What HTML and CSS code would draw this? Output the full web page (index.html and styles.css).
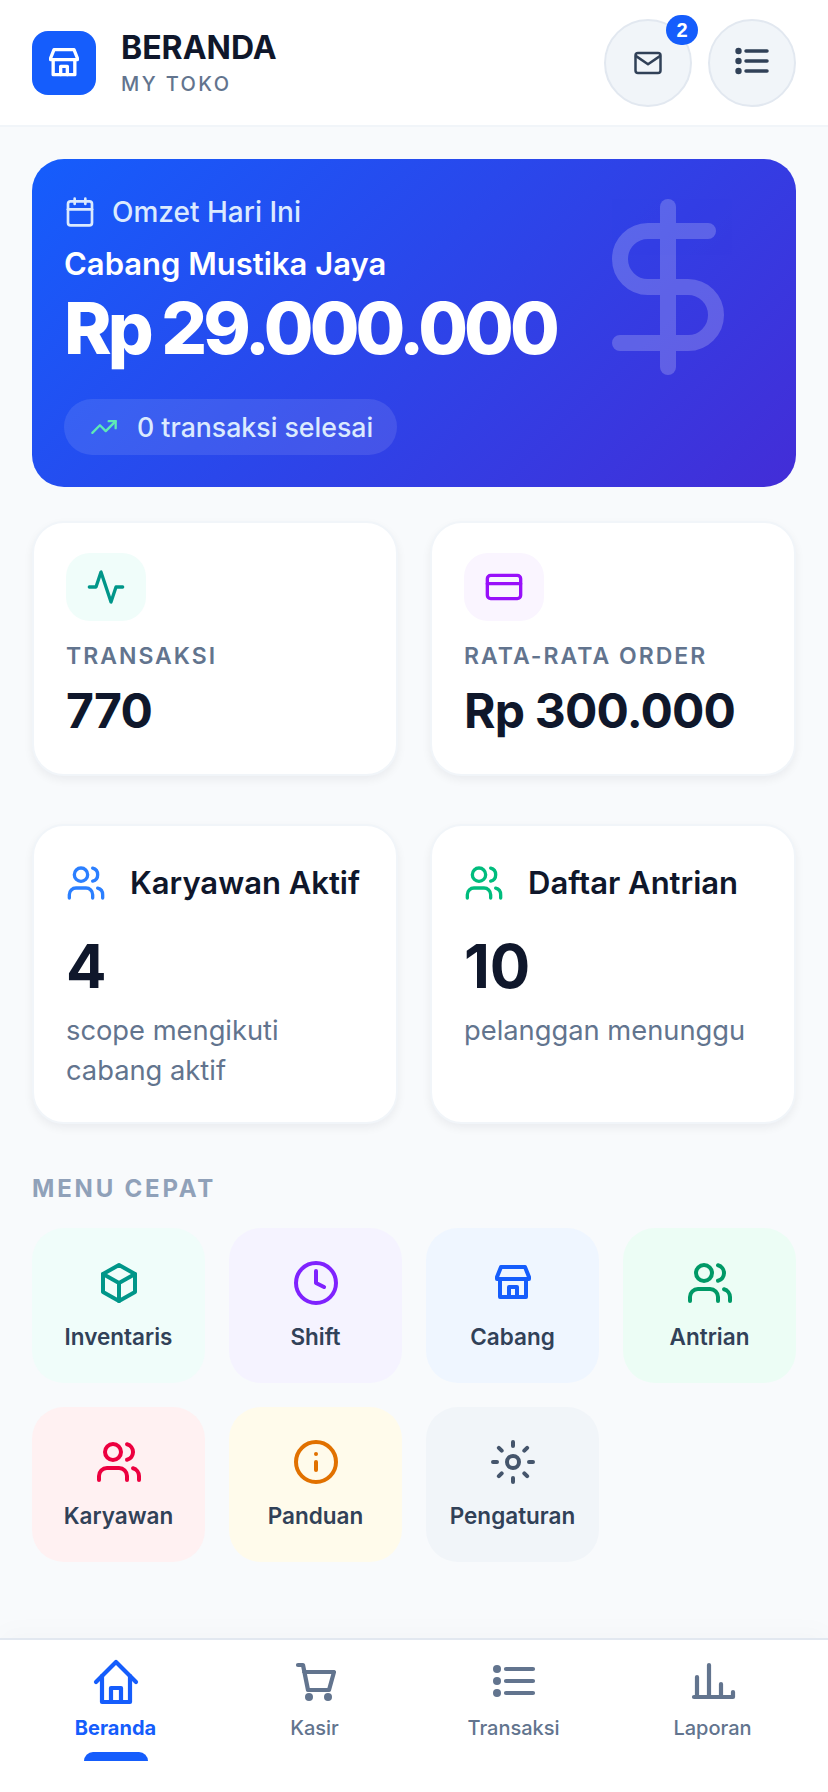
FILE: index.html
```html
<!DOCTYPE html>
<html lang="id">
<head>
<meta charset="utf-8">
<title>Beranda - My Toko</title>
<link rel="stylesheet" href="styles.css">
</head>
<body>
<div class="app">
  <header class="topbar">
    <div class="brand">
      <div class="logo">
        <svg class="i40" viewBox="0 0 24 24"><path d="M6 4H18L20 9V10H4V9Z"/><path d="M5.5 10V19H18.5V10"/><path d="M10 19V14H14V19"/></svg>
      </div>
      <div class="brand-text">
        <div class="brand-title">BERANDA</div>
        <div class="brand-sub">MY TOKO</div>
      </div>
    </div>
    <div class="top-actions">
      <button class="round-btn">
        <svg class="i30" viewBox="0 0 24 24"><rect x="2" y="4" width="20" height="16" rx="2"/><path d="M2.5 6.5 12 13l9.5-6.5"/></svg>
        <span class="badge">2</span>
      </button>
      <button class="round-btn">
        <svg class="i36" viewBox="0 0 36 36"><path class="thick" d="M12 6H33M12 16H33M12 26H33"/><circle class="dot" cx="4.5" cy="6" r="3.2"/><circle class="dot" cx="4.5" cy="16" r="3.2"/><circle class="dot" cx="4.5" cy="26" r="3.2"/></svg>
      </button>
    </div>
  </header>

  <main class="content">
    <section class="hero">
      <svg class="hero-bg" viewBox="0 0 24 24"><path d="M12 2v20"/><path d="M17 5H9.5a3.5 3.5 0 0 0 0 7h5a3.5 3.5 0 0 1 0 7H6"/></svg>
      <div class="hero-label">
        <svg class="i32" viewBox="0 0 24 24"><path d="M8 2v4M16 2v4"/><rect x="3" y="4" width="18" height="18" rx="2"/><path d="M3 10h18"/></svg>
        <span>Omzet Hari Ini</span>
      </div>
      <div class="hero-branch">Cabang Mustika Jaya</div>
      <div class="hero-amount">Rp 29.000.000</div>
      <div class="hero-pill">
        <svg class="i28" viewBox="0 0 24 24"><path d="M22 7l-8.5 8.5-5-5L2 17"/><path d="M16 7h6v6"/></svg>
        <span>0 transaksi selesai</span>
      </div>
    </section>

    <section class="grid stats">
      <div class="card">
        <div class="card-icon bg-teal">
          <svg class="i40 c-teal" viewBox="0 0 24 24"><path d="M22 12h-4l-3 9L9 3l-3 9H2"/></svg>
        </div>
        <div class="stat-label">TRANSAKSI</div>
        <div class="stat-value">770</div>
      </div>
      <div class="card">
        <div class="card-icon bg-purple">
          <svg class="i40 c-purple" viewBox="0 0 24 24"><rect x="2" y="5" width="20" height="14" rx="2"/><path d="M2 10h20"/></svg>
        </div>
        <div class="stat-label">RATA-RATA ORDER</div>
        <div class="stat-value">Rp 300.000</div>
      </div>
    </section>

    <section class="grid infos">
      <div class="card">
        <div class="info-head">
          <svg class="i40 c-blue5" viewBox="0 0 24 24"><path d="M16 21v-2a4 4 0 0 0-4-4H6a4 4 0 0 0-4 4v2"/><circle cx="9" cy="7" r="4"/><path d="M22 21v-2a4 4 0 0 0-3-3.87"/><path d="M16 3.13a4 4 0 0 1 0 7.75"/></svg>
          <span>Karyawan Aktif</span>
        </div>
        <div class="info-value">4</div>
        <div class="info-sub">scope mengikuti cabang aktif</div>
      </div>
      <div class="card">
        <div class="info-head">
          <svg class="i40 c-emerald5" viewBox="0 0 24 24"><path d="M16 21v-2a4 4 0 0 0-4-4H6a4 4 0 0 0-4 4v2"/><circle cx="9" cy="7" r="4"/><path d="M22 21v-2a4 4 0 0 0-3-3.87"/><path d="M16 3.13a4 4 0 0 1 0 7.75"/></svg>
          <span>Daftar Antrian</span>
        </div>
        <div class="info-value">10</div>
        <div class="info-sub">pelanggan menunggu</div>
      </div>
    </section>

    <h2 class="menu-title">MENU CEPAT</h2>
    <section class="menu">
      <a class="tile bg-teal">
        <svg class="i48 c-teal" viewBox="0 0 24 24"><path d="M12 3L20 7.5V16.5L12 21L4 16.5V7.5Z"/><path d="M4 7.5 12 12l8-4.5"/><path d="M12 21V12"/></svg>
        <span>Inventaris</span>
      </a>
      <a class="tile bg-violet">
        <svg class="i48 c-violet" viewBox="0 0 24 24"><circle cx="12" cy="12" r="10"/><path d="M12 6v6l4 2"/></svg>
        <span>Shift</span>
      </a>
      <a class="tile bg-blue">
        <svg class="i48 c-blue" viewBox="0 0 24 24"><path d="M6 4H18L20 9V10H4V9Z"/><path d="M5.5 10V19H18.5V10"/><path d="M10 19V14H14V19"/></svg>
        <span>Cabang</span>
      </a>
      <a class="tile bg-green">
        <svg class="i48 c-emerald" viewBox="0 0 24 24"><path d="M16 21v-2a4 4 0 0 0-4-4H6a4 4 0 0 0-4 4v2"/><circle cx="9" cy="7" r="4"/><path d="M22 21v-2a4 4 0 0 0-3-3.87"/><path d="M16 3.13a4 4 0 0 1 0 7.75"/></svg>
        <span>Antrian</span>
      </a>
      <a class="tile bg-rose">
        <svg class="i48 c-rose" viewBox="0 0 24 24"><path d="M16 21v-2a4 4 0 0 0-4-4H6a4 4 0 0 0-4 4v2"/><circle cx="9" cy="7" r="4"/><path d="M22 21v-2a4 4 0 0 0-3-3.87"/><path d="M16 3.13a4 4 0 0 1 0 7.75"/></svg>
        <span>Karyawan</span>
      </a>
      <a class="tile bg-amber">
        <svg class="i48 c-amber" viewBox="0 0 24 24"><circle cx="12" cy="12" r="10"/><path d="M12 16v-4"/><path d="M12 8h.01"/></svg>
        <span>Panduan</span>
      </a>
      <a class="tile bg-slate">
        <svg class="i48 c-slate" viewBox="0 0 24 24"><circle cx="12" cy="12" r="3"/><path d="M12 2v2M12 20v2M4.93 4.93l1.41 1.41M17.66 17.66l1.41 1.41M2 12h2M20 12h2M6.34 17.66l-1.41 1.41M19.07 4.93l-1.41 1.41"/></svg>
        <span>Pengaturan</span>
      </a>
    </section>
  </main>

  <nav class="tabbar">
    <a class="tab active">
      <svg class="nav-icon" viewBox="0 0 48 48"><path d="M4 25 24 5l20 20"/><path d="M10 19V45H38V19"/><path d="M19 45V31H29V45"/></svg>
      <span>Beranda</span>
      <i class="indicator"></i>
    </a>
    <a class="tab">
      <svg class="nav-icon" viewBox="0 0 48 48"><path d="M7 8h5l5 25h21l5-18H13"/><circle class="dot" cx="18" cy="40" r="4"/><circle class="dot" cx="37" cy="40" r="4"/></svg>
      <span>Kasir</span>
    </a>
    <a class="tab">
      <svg class="nav-icon" viewBox="0 0 48 48"><path d="M16 12H43M16 24H43M16 36H43"/><circle class="dot" cx="7" cy="12" r="4"/><circle class="dot" cx="7" cy="24" r="4"/><circle class="dot" cx="7" cy="36" r="4"/></svg>
      <span>Transaksi</span>
    </a>
    <a class="tab">
      <svg class="nav-icon" viewBox="0 0 48 48"><path d="M5 40H44M8 40V20M20 40V8M32 40V27M44 40V35"/></svg>
      <span>Laporan</span>
    </a>
  </nav>
</div>
</body>
</html>
```
FILE: styles.css
```css
* { box-sizing: border-box; }
html, body { margin: 0; padding: 0; }
body { font-family: Inter, "Liberation Sans", sans-serif; background: #f8fafc; color: #0f172b; }
.app { width: 828px; height: 1792px; display: flex; flex-direction: column; overflow: hidden; }

svg { fill: none; stroke: currentColor; stroke-width: 2; stroke-linecap: round; stroke-linejoin: round; flex: none; display: block; }
svg .dot { fill: currentColor; stroke: none; }
.i28 { width: 28px; height: 28px; }
.i30 { width: 30px; height: 30px; }
.i32 { width: 32px; height: 32px; }
.i36 { width: 36px; height: 36px; }
.i40 { width: 40px; height: 40px; }
.i48 { width: 48px; height: 48px; }

.topbar { height: 127px; flex: none; display: flex; align-items: center; justify-content: space-between; padding: 0 32px; background: #fff; border-bottom: 2px solid #f1f5f9; }
.brand { display: flex; align-items: center; gap: 25px; }
.logo { width: 64px; height: 64px; border-radius: 16px; background: #155dfc; color: #fff; display: flex; align-items: center; justify-content: center; }
.brand-text { padding-top: 2px; }
.brand-title { font-size: 32px; line-height: 36px; font-weight: 700; color: #0f172b; }
.brand-sub { font-size: 20px; line-height: 28px; margin-top: 4px; font-weight: 500; letter-spacing: 2.4px; color: #62748e; }
.top-actions { display: flex; gap: 16px; }
.round-btn { position: relative; width: 88px; height: 88px; border-radius: 50%; background: #f1f5f9; border: 2px solid #e2e8f0; color: #314158; padding: 0; display: flex; align-items: center; justify-content: center; }
.i36 .thick { stroke-width: 3.5; }
.badge { position: absolute; top: -6px; right: -8px; width: 32px; height: 30px; border-radius: 15px; background: #155dfc; color: #fff; font-size: 20px; font-weight: 700; line-height: 30px; text-align: center; }

.content { flex: 1; padding: 32px 32px 0; min-height: 0; }

.hero { position: relative; height: 328px; border-radius: 32px; padding: 37px 32px 0; color: #fff; overflow: hidden; background: linear-gradient(135deg, #155dfc, #432dd7); }
.hero-bg { position: absolute; top: 32px; right: 32px; width: 192px; height: 192px; color: #fff; opacity: .2; }
.hero-label { display: flex; align-items: center; gap: 16px; color: #dbeafe; font-size: 28px; font-weight: 500; line-height: 32px; }
.hero-branch { margin-top: 18px; font-size: 31px; font-weight: 600; line-height: 36px; }
.hero-amount { margin-top: 8px; font-size: 72px; font-weight: 800; line-height: 76px; letter-spacing: -4px; }
.hero-pill { display: inline-flex; align-items: center; gap: 19px; height: 56px; margin-top: 33px; padding: 0 24px 0 26px; border-radius: 28px; background: rgba(255,255,255,.1); color: #dbeafe; font-size: 26.7px; font-weight: 500; }
.hero-pill svg { color: #5ee9b5; }

.grid { display: grid; grid-template-columns: repeat(2, minmax(0, 1fr)); gap: 32px; }
.stats { margin-top: 34px; }
.infos { margin-top: 48px; }
.card { background: #fff; border: 2px solid #f1f5f9; border-radius: 32px; box-shadow: 0 4px 10px rgba(15,23,42,.06); padding: 30px 32px 0; }
.stats .card { height: 255px; }
.infos .card { height: 300px; }
.card-icon { width: 80px; height: 68px; border-radius: 24px; display: flex; align-items: center; justify-content: center; }
.stat-label { margin-top: 19px; font-size: 23px; line-height: 32px; font-weight: 600; letter-spacing: 2px; color: #62748e; white-space: nowrap; }
.stat-value { margin-top: 7px; font-size: 48px; line-height: 64px; font-weight: 700; letter-spacing: -.8px; color: #0f172b; white-space: nowrap; }
.info-head { display: flex; align-items: center; gap: 24px; font-size: 31px; line-height: 40px; font-weight: 600; color: #0f172b; white-space: nowrap; margin-top: 7px; }
.info-value { margin-top: 27px; font-size: 60px; line-height: 72px; font-weight: 700; color: #0f172b; }
.info-sub { margin-top: 9px; font-size: 27.3px; line-height: 40px; color: #62748e; }

.menu-title { margin: 49px 0 0; font-size: 24px; line-height: 32px; font-weight: 700; letter-spacing: 2.8px; color: #90a1b9; }
.menu { margin-top: 23px; display: grid; grid-template-columns: repeat(4, minmax(0, 1fr)); gap: 24px; }
.tile { height: 155px; border-radius: 32px; display: flex; flex-direction: column; align-items: center; padding-top: 31px; gap: 14px; font-size: 22.5px; line-height: 32px; font-weight: 600; color: #314158; }

.bg-teal { background: #f0fdfa; }
.bg-purple { background: #faf5ff; }
.bg-violet { background: #f5f3ff; }
.bg-blue { background: #eff6ff; }
.bg-green { background: #ecfdf5; }
.bg-rose { background: #fff1f2; }
.bg-amber { background: #fffbeb; }
.bg-slate { background: #f1f5f9; }
.c-teal { color: #009689; }
.c-purple { color: #9810fa; }
.c-violet { color: #7f22fe; }
.c-blue { color: #155dfc; }
.c-blue5 { color: #2b7fff; }
.c-emerald { color: #009966; }
.c-emerald5 { color: #00bc7d; }
.c-rose { color: #ec003f; }
.c-amber { color: #e17100; }
.c-slate { color: #45556c; }

.tabbar { flex: none; height: 154px; background: #fff; border-top: 2px solid #e2e8f0; box-shadow: 0 -8px 24px rgba(15,23,42,.02); display: grid; grid-template-columns: repeat(4, minmax(0, 1fr)); padding: 0 16px; }
.tab { position: relative; display: flex; flex-direction: column; align-items: center; padding-top: 17px; gap: 9px; font-size: 20px; line-height: 28px; font-weight: 500; color: #62748e; }
.nav-icon { width: 48px; height: 48px; stroke-width: 4.2; }
.tab.active { color: #155dfc; font-weight: 700; }
.indicator { position: absolute; top: 112px; left: 68px; width: 64px; height: 9px; background: #155dfc; border-radius: 12px 12px 0 0; }
```
